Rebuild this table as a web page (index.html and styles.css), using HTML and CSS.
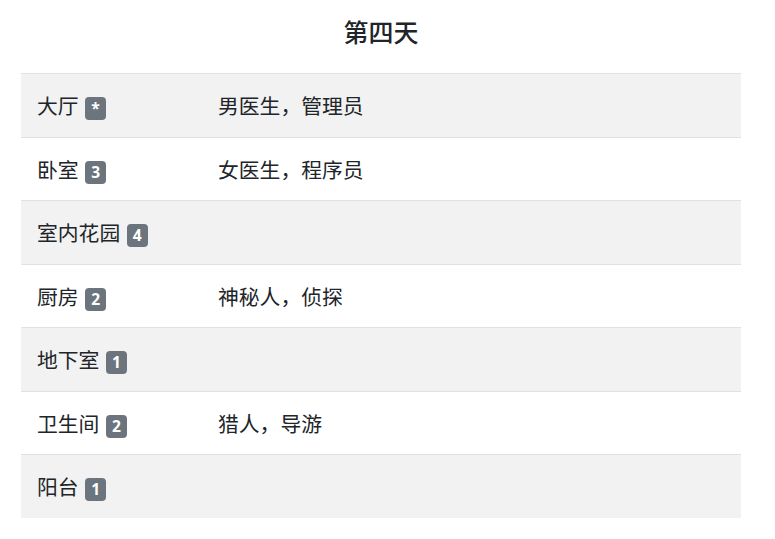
FILE: index.html
```html
<!DOCTYPE html>
<html lang="zh">
<head>
<meta charset="utf-8">
<link rel="stylesheet" href="styles.css">
</head>
<body>
<div class="wrap">
  <h3 class="title">第四天</h3>
  <table class="table">
    <tbody>
      <tr><td class="room">大厅 <span class="badge">*</span></td><td>男医生，管理员</td></tr>
      <tr><td class="room">卧室 <span class="badge">3</span></td><td>女医生，程序员</td></tr>
      <tr><td class="room">室内花园 <span class="badge">4</span></td><td></td></tr>
      <tr><td class="room">厨房 <span class="badge">2</span></td><td>神秘人，侦探</td></tr>
      <tr><td class="room">地下室 <span class="badge">1</span></td><td></td></tr>
      <tr><td class="room">卫生间 <span class="badge">2</span></td><td>猎人，导游</td></tr>
      <tr><td class="room">阳台 <span class="badge">1</span></td><td></td></tr>
    </tbody>
  </table>
</div>
</body>
</html>
```

FILE: styles.css
```css
html, body {
  margin: 0;
  padding: 0;
  background: #fff;
}
body {
  font-family: "Open Sans", "Noto Sans CJK SC", sans-serif;
  color: #212529;
  font-size: 20.8px;
}
.wrap {
  width: 720px;
  margin-left: 21px;
  padding-top: 12px;
}
.title {
  margin: 0 0 21px 0;
  text-align: center;
  font-size: 25px;
  font-weight: 500;
  line-height: 40px;
}
.table {
  width: 100%;
  border-collapse: collapse;
}
.table td {
  padding: 17px 16px 15px 16px;
  line-height: 30.5px;
  border-top: 1px solid #dee2e6;
  vertical-align: top;
}
.table td.room {
  width: 149px;
}
.table tr:nth-child(odd) td {
  background: #f2f2f2;
}
.badge {
  display: inline-block;
  margin-left: 1px;
  background: #6c757d;
  color: #fff;
  font-size: 15.6px;
  font-weight: 700;
  line-height: 1;
  padding: 3.9px 6.2px;
  border-radius: 4px;
  vertical-align: baseline;
}
```
